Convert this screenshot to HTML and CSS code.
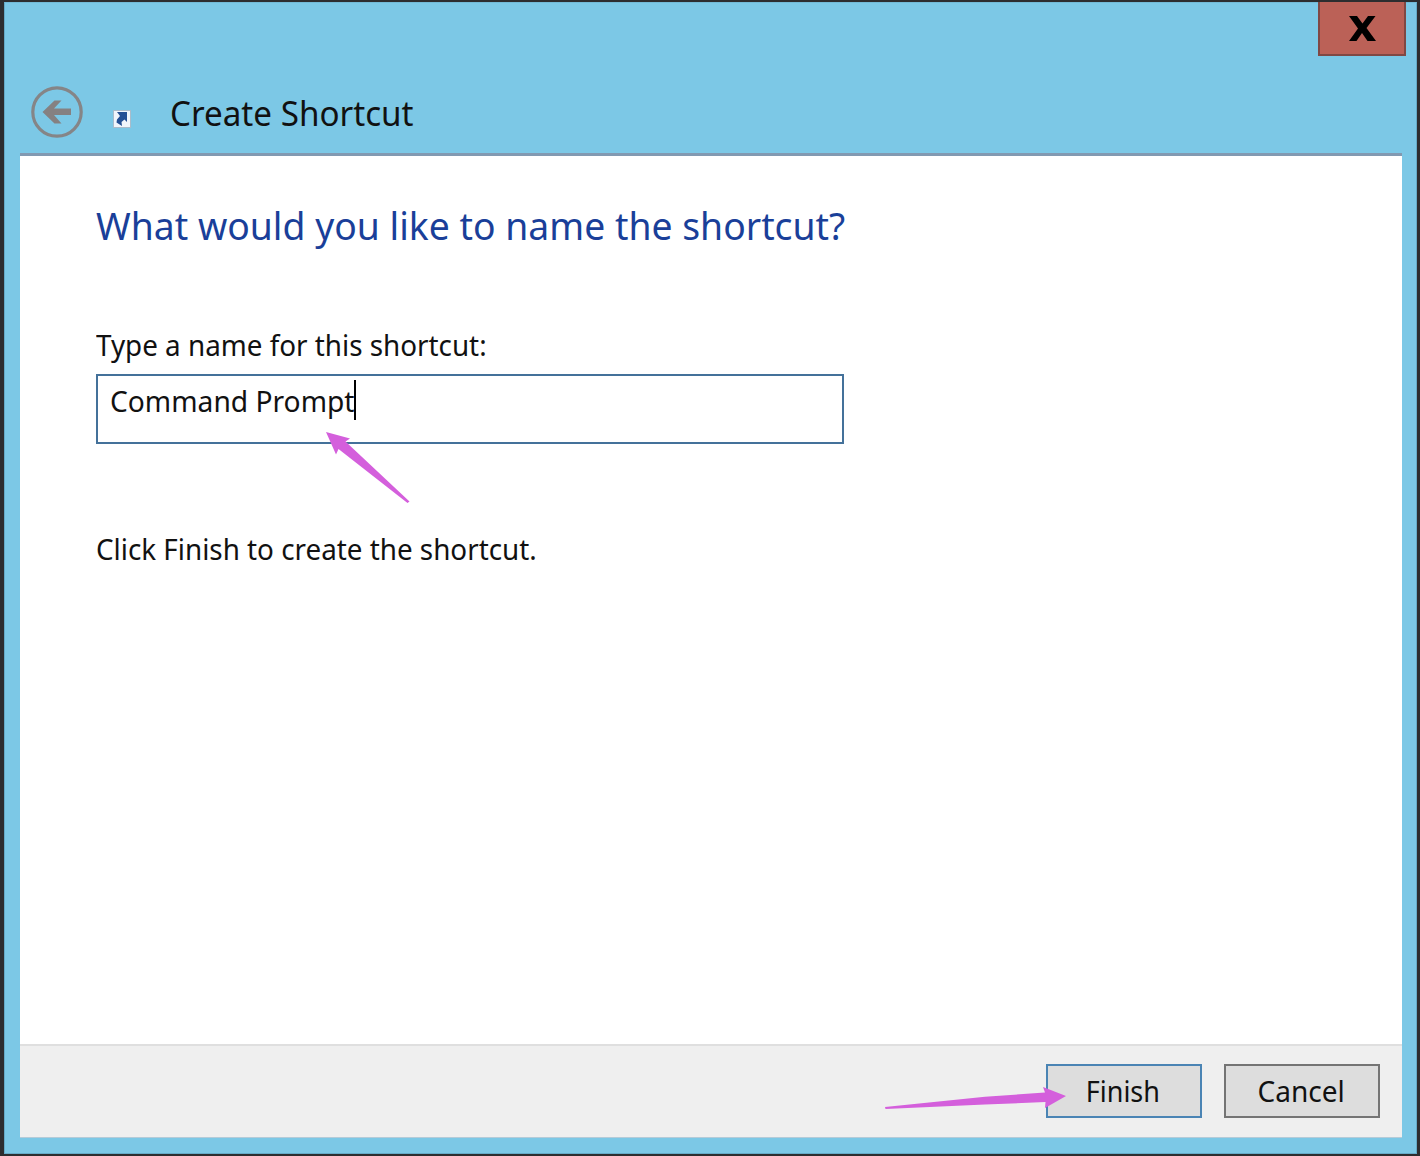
FILE: index.html
```html
<!DOCTYPE html>
<html lang="en">
<head>
<meta charset="utf-8">
<title>Create Shortcut</title>
<link rel="stylesheet" href="styles.css">
</head>
<body>
<div class="window">
  <header class="titlebar">
    <svg class="back" width="54" height="54" viewBox="0 0 54 54" aria-label="Back">
      <circle cx="27" cy="27" r="24.200" fill="none" stroke="#858587" stroke-width="3.200"/>
      <path d="M12.500 27L24.500 15.500H31.500L24 23.500H41V30H24L31.500 38.500H24.500Z" fill="#858182"/>
    </svg>
    <svg class="shortcut" width="18" height="18" viewBox="0 0 18 18">
      <rect x=".5" y=".5" width="17" height="17" fill="#f0f5fb" stroke="#a9bccb"/>
      <path d="M4 2H14V12L11.500 9.500L8.500 12L9 16L3.500 12.500L4 9.500L7 6Z" fill="#234f94"/>
    </svg>
    <h1 class="title"><span class="t t-title">Create Shortcut</span></h1>
    <button class="close" aria-label="Close"><svg width="27" height="25" viewBox="0 0 27 25"><path d="M0 0H8L13.500 7.500L19 0H26.500L17.500 12L27 25H18.500L13 17L7.500 25H0L9 12.500Z" fill="#000"/></svg></button>
  </header>
  <main class="content">
    <h2 class="heading"><span class="t t-heading">What would you like to name the shortcut?</span></h2>
    <p class="label"><span class="t t-label">Type a name for this shortcut:</span></p>
    <div class="field"><span class="t t-value">Command Prompt</span><i class="caret"></i></div>
    <p class="hint"><span class="t t-hint">Click Finish to create the shortcut.</span></p>
  </main>
  <footer class="footer">
    <button class="btn primary"><span class="t t-finish">Finish</span></button>
    <button class="btn"><span class="t t-cancel">Cancel</span></button>
  </footer>
</div>
<svg class="marks" width="1420" height="1156" viewBox="0 0 1420 1156">
  <path d="M326 432L350 438.500L345.500 441.500L409.500 501.500L407.500 503L338.500 449L336 454.500Z" fill="#d45fdc"/>
  <path d="M885 1107L985 1096.800L1045 1092.500L1043 1087L1066 1096L1045 1108L1045.500 1102L985 1104.500L885.500 1109Z" fill="#d45fdc"/>
</svg>
</body>
</html>
```
FILE: styles.css
```css
* { box-sizing: border-box; }
body { margin: 0; width: 1420px; height: 1156px; overflow: hidden; background: #2d2d2f; padding: 2px 3px 2px 4px; font-family: "Noto Sans", "Open Sans", sans-serif; font-size: 29px; color: #111; }
h1, h2, p { margin: 0; font-weight: 400; }
.window { height: 1152px; background: #7cc8e6; border: 1px solid #65aac7; border-top-color: #73bad7; padding: 0 14px 15px 15px; display: flex; flex-direction: column; }
.titlebar { height: 150px; display: flex; align-items: flex-start; }
.back { margin: 82px 0 0 10px; }
.shortcut { margin: 107px 0 0 29px; }
.title { margin: 85px 0 0 39px; flex: 1; font-size: 34px; line-height: 50px; }
.close { width: 88px; height: 54px; margin: -1px -4px 0 0; padding: 0; border: 2px solid #804844; border-top: 0; background: #bb6157; display: flex; align-items: center; justify-content: center; }
.content { flex: 1; background: #fff; border-top: 3px solid #8299b1; padding: 0 76px; }
.heading { margin-top: 41px; font-size: 39px; line-height: 56px; color: #1a3f99; }
.label { margin-top: 72px; line-height: 40px; }
.field { width: 748px; height: 70px; margin-top: 9px; border: 2px solid #44719a; display: flex; padding: 5px 12px; line-height: 40px; }
.caret { width: 2px; height: 40px; margin: -1px 0 0 -8px; background: #000; }
.hint { margin-top: 85px; line-height: 40px; }
.footer { height: 94px; background: #efefef; border-top: 2px solid #dfdfdf; border-bottom: 1px solid #b5cbd8; display: flex; justify-content: flex-end; gap: 22px; padding: 18px 22px 0; }
.btn { width: 156px; height: 54px; padding: 0; border: 2px solid #747474; background: #ddd; font: inherit; color: inherit; line-height: 50px; }
.primary { border-color: #4a84b4; }
.t { display: inline-block; white-space: nowrap; transform-origin: left; }
.t-title { transform: scaleX(.976); }
.t-heading { transform: scaleX(.957); }
.t-label, .t-hint { transform: scaleX(.959); }
.t-value { transform: scaleX(.972); }
.t-finish { transform: translateX(-1px) scaleX(.93); transform-origin: center; }
.t-cancel { transform: translateX(-1px) scaleX(.967); transform-origin: center; }
.marks { position: absolute; left: 0; top: 0; pointer-events: none; }
```
